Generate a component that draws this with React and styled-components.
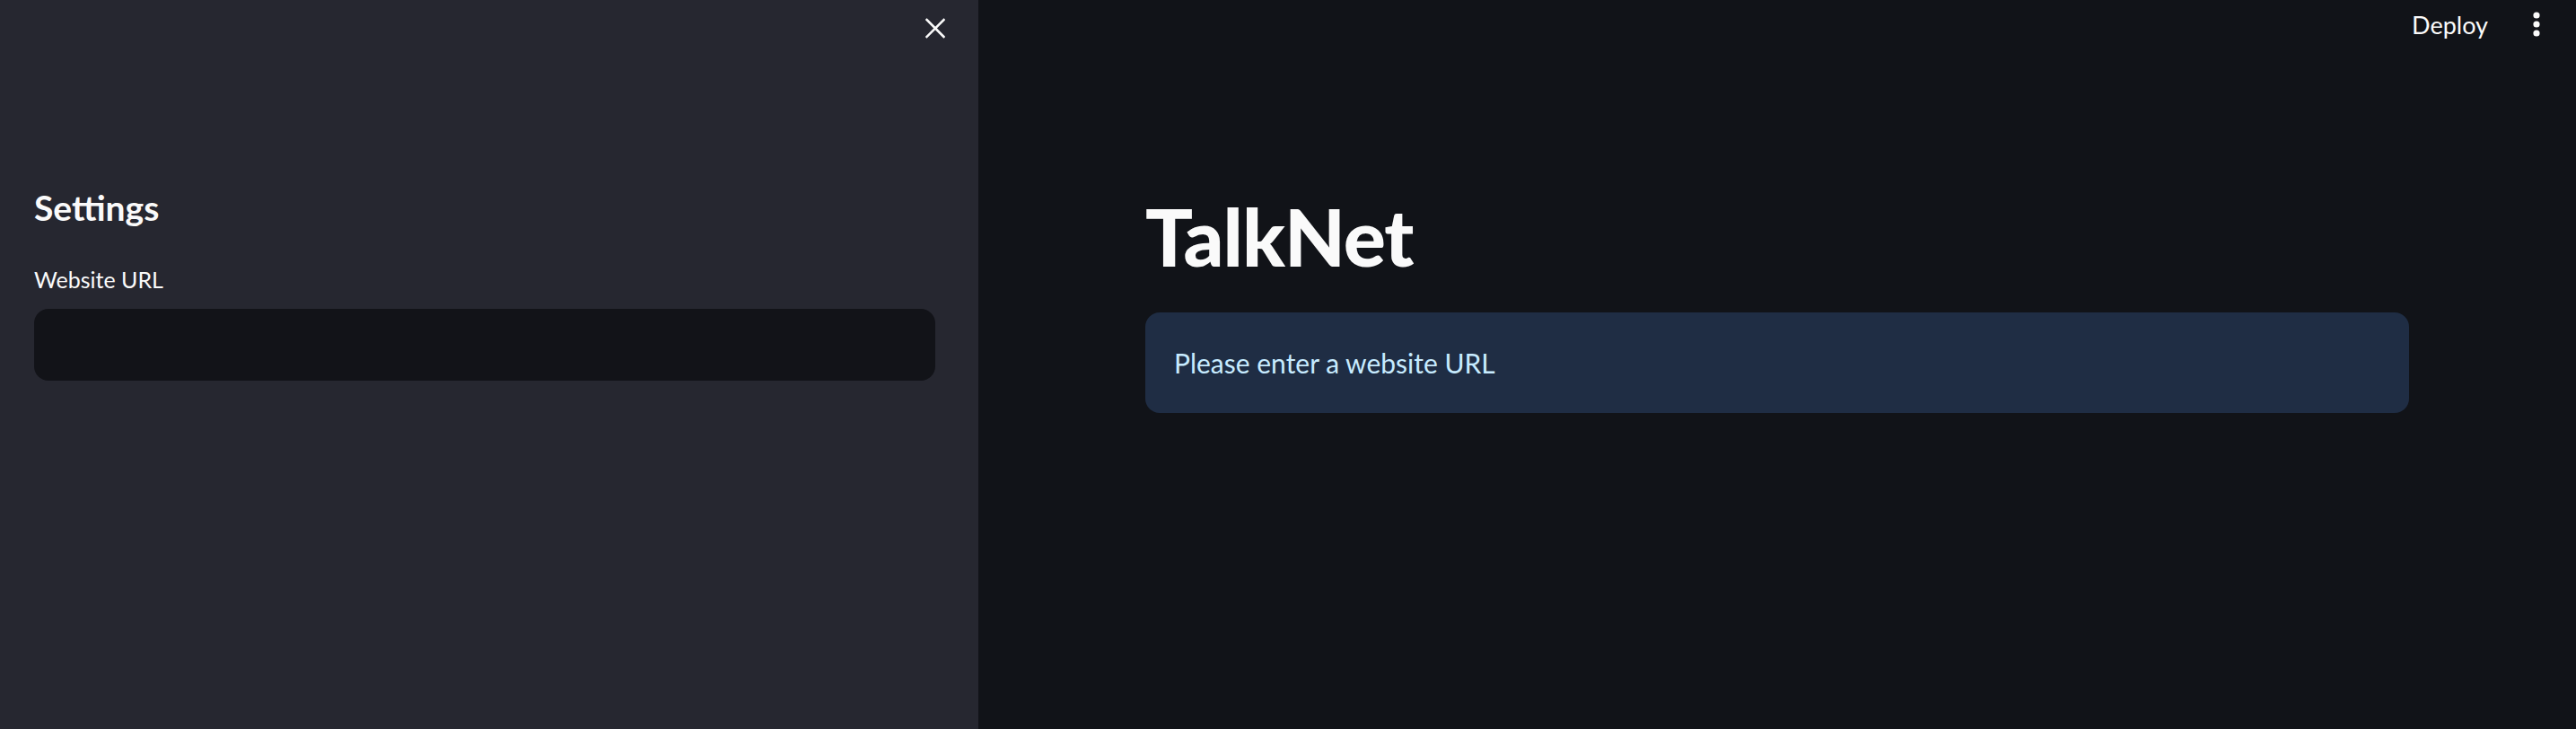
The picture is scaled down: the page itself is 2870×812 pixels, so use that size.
import React from "react";
import styled, { createGlobalStyle } from "styled-components";

const Global = createGlobalStyle`
  html, body { margin: 0; padding: 0; background: #0e1117; }
  body { font-family: "Lato", "Noto Sans", sans-serif; color: #fafafa; }
  * { box-sizing: border-box; }
`;

const Shell = styled.div`
  display: flex;
  height: 812px;
  width: 100%;
`;

const Sidebar = styled.aside`
  width: 1090px;
  flex: 0 0 1090px;
  background: #262730;
  display: flex;
  flex-direction: column;
`;

const SidebarHeader = styled.div`
  display: flex;
  justify-content: flex-end;
  align-items: flex-start;
  height: 62px;
  padding: 20px 37px 0 0;
`;

const IconButton = styled.button`
  background: none;
  border: none;
  padding: 0;
  width: 22px;
  height: 23px;
  display: flex;
  align-items: center;
  justify-content: center;
  color: #fafafa;
  cursor: pointer;
`;

const SidebarBody = styled.div`
  padding: 145px 48px 0 38px;
  display: flex;
  flex-direction: column;
`;

const SideTitle = styled.h2`
  margin: 0;
  font-size: 39px;
  font-weight: 700;
  line-height: 48px;
  color: #fafafa;
`;

const Label = styled.label`
  margin-top: 40px;
  font-size: 25px;
  line-height: 32px;
  color: #fafafa;
`;

const Input = styled.input`
  margin-top: 17px;
  height: 80px;
  width: 100%;
  background: #121318;
  border: none;
  border-radius: 16px;
  outline: none;
  color: #fafafa;
  font: inherit;
  padding: 0 24px;
`;

const Main = styled.main`
  flex: 1;
  display: flex;
  flex-direction: column;
  background: #111318;
`;

const Toolbar = styled.div`
  display: flex;
  justify-content: flex-end;
  align-items: center;
  gap: 50px;
  height: 54px;
  padding: 0 40px 0 0;
`;

const DeployButton = styled.button`
  background: none;
  border: none;
  color: #fafafa;
  font-family: inherit;
  font-size: 27px;
  padding: 0;
  cursor: pointer;
`;

const Content = styled.div`
  width: 1408px;
  margin: 0 auto;
  padding-top: 159px;
`;

const Title = styled.h1`
  margin: 0;
  font-size: 88px;
  font-weight: 900;
  line-height: 100px;
  color: #fafafa;
  letter-spacing: -1px;
`;

const InfoBox = styled.div`
  margin-top: 35px;
  background: #1f2d44;
  border-radius: 16px;
  height: 112px;
  display: flex;
  align-items: center;
  padding: 0 32px;
  color: #c7ebff;
  font-size: 30px;
`;

export default function App() {
  return (
    <>
      <Global />
      <Shell>
        <Sidebar>
          <SidebarHeader>
            <IconButton aria-label="Close sidebar">
              <svg width="22" height="23" viewBox="0 0 22 23">
                <path d="M1.5 2 L20.5 21 M20.5 2 L1.5 21" stroke="#fafafa" strokeWidth="2.6" strokeLinecap="square" />
              </svg>
            </IconButton>
          </SidebarHeader>
          <SidebarBody>
            <SideTitle>Settings</SideTitle>
            <Label htmlFor="url">Website URL</Label>
            <Input id="url" type="text" />
          </SidebarBody>
        </Sidebar>
        <Main>
          <Toolbar>
            <DeployButton>Deploy</DeployButton>
            <svg width="8" height="28" viewBox="0 0 8 28">
              <circle cx="4" cy="4" r="3.6" fill="#fafafa" />
              <circle cx="4" cy="14" r="3.6" fill="#fafafa" />
              <circle cx="4" cy="24" r="3.6" fill="#fafafa" />
            </svg>
          </Toolbar>
          <Content>
            <Title>TalkNet</Title>
            <InfoBox>Please enter a website URL</InfoBox>
          </Content>
        </Main>
      </Shell>
    </>
  );
}
